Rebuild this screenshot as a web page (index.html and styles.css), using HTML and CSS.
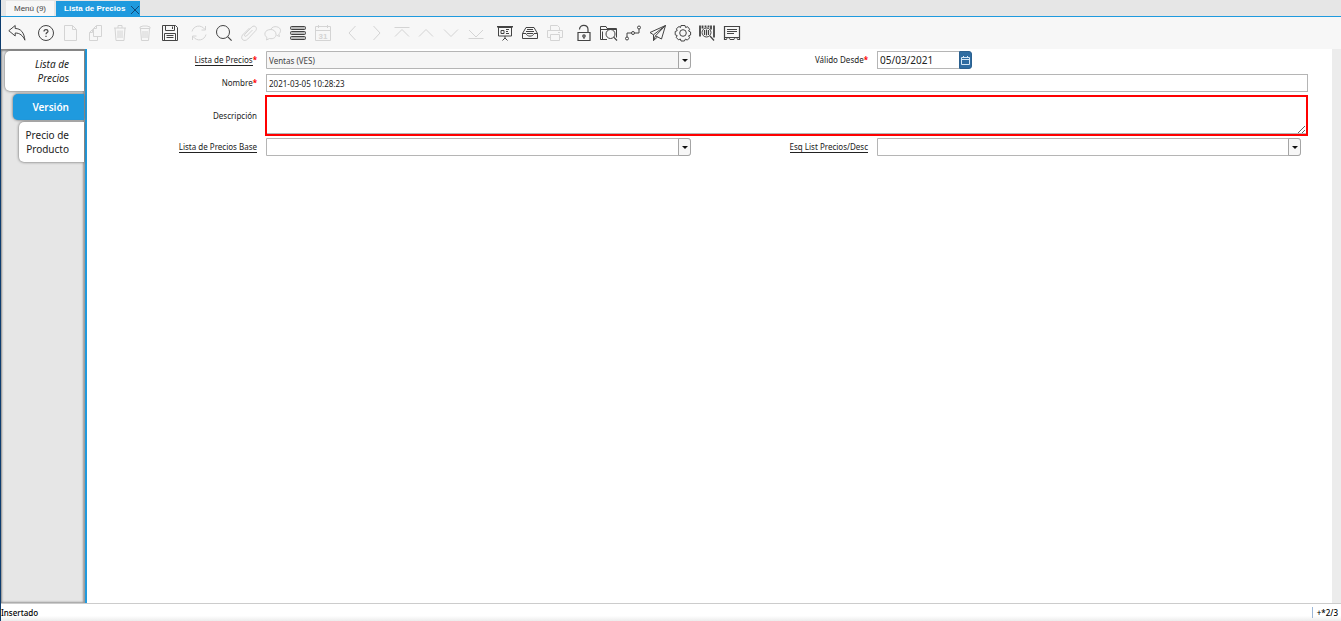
FILE: index.html
```html
<!DOCTYPE html>
<html lang="es">
<head>
  <meta charset="UTF-8">
  <title>Lista de Precios</title>
  <meta name="viewport" content="width=device-width, initial-scale=1.0">
  <link rel="stylesheet" href="styles.css">
</head>
<body>

<nav class="window-tabs">
  <button class="window-tab">Menú (9)</button>
  <button class="window-tab active">Lista de Precios
    <svg class="close" viewBox="0 0 10 10"><path d="M1 1l8 8M9 1l-8 8"/></svg>
  </button>
</nav>

<div class="toolbar">
  <div class="group single">
    <button class="tool" aria-label="Deshacer"><svg viewBox="0 0 18 18"><path d="M.8 6.700L7.200 1.500v3c5.500 0 9 4 9.700 11.700C14.800 11.400 11.800 9 7.200 9v3z"/></svg></button>
  </div>
  <div class="group wide">
    <button class="tool" aria-label="Ayuda"><svg viewBox="0 0 18 18"><circle cx="9" cy="9" r="7.500"/><path class="bold" d="M7 7.500c0-2.700 4-2.400 4-.3C11 8.600 9 8.600 9 10.300M9 11.800v1.200"/></svg></button>
    <button class="tool" aria-label="Nuevo" disabled><svg viewBox="0 0 18 18"><path d="M2.500 1.500h8l4 4v11h-12zM10.500 1.500v4h4"/></svg></button>
    <button class="tool" aria-label="Copiar" disabled><svg viewBox="0 0 18 18"><path d="M6.500 4.500l3-3h5v11h-8zM6.500 4.500h3v-3M6.500 5.500h-1l-3 3v8h8v-4M2.500 8.500h3v-3"/></svg></button>
    <button class="tool" aria-label="Borrar" disabled><svg viewBox="0 0 18 18"><path d="M3 4h12M7 4V1.500h4V4M4 4l1 12.500h8L14 4M7 6.500v7.500M9 6.500v7.500M11 6.500v7.500"/></svg></button>
    <button class="tool" aria-label="Borrar selección" disabled><svg viewBox="0 0 18 18"><path d="M4 4.500V3l3-1h4l3 1v1.500zM4.500 4.500l1 12h7l1-12M7 7v7M9 7v7M11 7v7"/></svg></button>
    <button class="tool" aria-label="Guardar"><svg viewBox="0 0 18 18"><path d="M1.500 1.500h13l2 2v13h-15zM4.500 1.500v5h9v-5M3.500 16.500v-7h11v7M5.500 11.500h7M5.500 13.500h7"/><path d="M11.500 2.500v2.500"/></svg></button>
  </div>
  <div class="group wide">
    <button class="tool" aria-label="Actualizar" disabled><svg viewBox="0 0 18 18"><path d="M2 7.500C3.500 1.500 11 0 15 5.500M15.500 2v4h-4M16 10.500c-1.500 6-9 7.500-13 2M2.500 16v-4h4"/></svg></button>
    <button class="tool" aria-label="Buscar"><svg viewBox="0 0 18 18"><circle cx="8" cy="8" r="6.500"/><path class="bold" d="M12.600 12.600l4 4"/></svg></button>
    <button class="tool" aria-label="Anexo" disabled><svg viewBox="0 0 18 18"><path d="M12.500 6l-6 6c-1.300 1-2.700-.3-1.700-1.700l7-7.300c3-2.500 6 .8 4 3.500l-8 8.500c-3.500 3.500-8 0-5.300-4L9.500 4"/></svg></button>
    <button class="tool" aria-label="Chat" disabled><svg viewBox="0 0 18 18"><path d="M7 5c2-4 10-2.500 9.500 1.700 0 1.500-.7 2.500-1.700 3.300l.7 2.500-3-1.300M7 5.500c-7 0-7.500 6-4 8L2.500 16l3-1.500c4 .8 6.500-1 6.500-4.200C12 7.500 9.500 5.500 7 5.500z"/></svg></button>
    <button class="tool" aria-label="Vista de lista"><svg viewBox="0 0 18 18"><rect class="bar" x="1.500" y="2.500" width="15" height="3" rx="1"/><rect class="bar" x="1.500" y="7.500" width="15" height="3" rx="1"/><rect class="bar" x="1.500" y="12.500" width="15" height="3" rx="1"/></svg></button>
    <button class="tool" aria-label="Calendario" disabled><svg viewBox="0 0 18 18"><path d="M1.500 2.500h15v14h-15zM1.500 6.500h15M4.500 1v3M13.500 1v3"/><text x="9" y="14.500">31</text></svg></button>
  </div>
  <div class="group wide">
    <button class="tool" aria-label="Anterior" disabled><svg viewBox="0 0 18 18"><path d="M12.500 2L6 9l6.500 7"/></svg></button>
    <button class="tool" aria-label="Siguiente" disabled><svg viewBox="0 0 18 18"><path d="M5.500 2L12 9l-6.500 7"/></svg></button>
    <button class="tool" aria-label="Primero" disabled><svg viewBox="0 0 18 18"><path d="M1.500 3.500h15M2 12.500l7-7 7 7"/></svg></button>
    <button class="tool" aria-label="Arriba" disabled><svg viewBox="0 0 18 18"><path d="M2 12.500l7-7 7 7"/></svg></button>
    <button class="tool" aria-label="Abajo" disabled><svg viewBox="0 0 18 18"><path d="M2 5.500l7 7 7-7"/></svg></button>
    <button class="tool" aria-label="Último" disabled><svg viewBox="0 0 18 18"><path d="M1.500 14.500h15M2 6l7 7 7-7"/></svg></button>
  </div>
  <div class="group">
    <button class="tool" aria-label="Informe"><svg viewBox="0 0 18 18"><path d="M1 2.500h16M2.500 2.500v9.500h13V2.500M1.500 3.500h15M9 12v2M6.500 16.500L9 14l2.500 2.500"/><path d="M5 6.500h3v3H5zM10 5.500h3M10 7.500h2M10 9.500h3"/></svg></button>
    <button class="tool" aria-label="Archivo"><svg viewBox="0 0 18 18"><path d="M1.500 9.500L5 3.500h8l3.500 6v5h-15zM1.500 9.500H5c1 3.500 7 3.500 8 0h3.500M6 5.500h6M5 7.500h8M6 9.500h6"/></svg></button>
    <button class="tool" aria-label="Imprimir" disabled><svg viewBox="0 0 18 18"><path d="M4.500 6.500v-5h7l2 2v3M4 13.500H1.500v-7h15v7H14M4.500 10.500h9v6h-9zM12 8.500h2"/></svg></button>
  </div>
  <div class="group last">
    <button class="tool" aria-label="Bloquear"><svg viewBox="0 0 18 18"><path class="bold" d="M3 8.500h12v8H3zM4.500 5.500c0-5.500 8.500-5.500 8.500 0v3"/><circle class="bold" cx="9" cy="12" r="1.200"/><path d="M9 13v2"/></svg></button>
    <button class="tool" aria-label="Detalle"><svg viewBox="0 0 18 18"><path d="M7 15.500H.500v-13H6l1 2h9.500v9M.500 5.500h16M2.500 15V7.500"/><circle cx="10.500" cy="10" r="4.500"/><path class="bold" d="M13.700 13.200l3.300 3.300"/></svg></button>
    <button class="tool" aria-label="Flujo de trabajo"><svg viewBox="0 0 18 18"><circle cx="3" cy="14.500" r="1.500"/><circle cx="9" cy="9" r="1.500"/><circle cx="15" cy="3.500" r="1.500"/><path d="M3 13V9h4.500M10.500 9H15V5"/></svg></button>
    <button class="tool" aria-label="Enviar"><svg viewBox="0 0 18 18"><path d="M16.500 1.500L1 8.500l3.500 2.300zM16.500 1.500L6.500 11.800l6 3.200zM4.500 10.800v5.700l2-4.700M4.500 16.500l4-3.500"/></svg></button>
    <button class="tool" aria-label="Procesos"><svg viewBox="0 0 18 18"><path d="M7 1.500h4l.6 2 2-.8 2 2.500-1 1.800 2 1v3l-2 .8 1 2-2.300 2.300-1.900-1-1 1.900H7l-.6-2-2 .8-2.200-2.500 1-1.700-2-.8V7.500l2-.8-.8-2L5 2.500l1.500 1z"/><circle cx="9" cy="9" r="3.300"/></svg></button>
    <button class="tool" aria-label="Código de barras"><svg viewBox="0 0 18 18"><path class="heavy" d="M2 1.500v11M4.500 1.500v3M7.500 1.500v2M10.500 1.500v2M13 1.500v4M16 1.500v12"/><circle cx="8.500" cy="8.500" r="4.500"/><path class="bold" d="M6.500 6v5M8.500 5.500v6M10.500 6v5M12 12l4 4.500"/></svg></button>
    <button class="tool" aria-label="Formulario"><svg viewBox="0 0 18 18"><path class="bold" d="M3.500 15.500h-2v-13h15v13h-2"/><path d="M3.500 15.500c0-2.500 3-2.500 3.500 0h4c.5-2.500 3.500-2.500 3.500 0M1.500 13.500h15M4 5.500h10M4 7.500h10M4 9.500h7"/></svg></button>
  </div>
</div>

<main class="content">
  <nav class="side-tabs">
    <button class="side-tab parent">Lista de<br>Precios</button>
    <button class="side-tab current">Versión</button>
    <button class="side-tab child">Precio de<br>Producto</button>
  </nav>

  <form class="form">
    <div class="row first">
      <label for="priceList"><span class="link">Lista de Precios</span><span class="required">*</span></label>
      <div class="combo">
        <select id="priceList" disabled><option>Ventas (VES)</option></select>
        <span class="arrow"></span>
      </div>
      <label for="validFrom">Válido Desde<span class="required">*</span></label>
      <div class="date">
        <input type="text" id="validFrom" value="05/03/2021">
        <button type="button" class="date-btn" aria-label="Calendario"><svg viewBox="0 0 11 11"><path d="M1.500 2.500h8v7h-8zM1.500 4.500h8M3.500 1v2M7.500 1v2"/></svg></button>
      </div>
    </div>
    <div class="row">
      <label for="name">Nombre<span class="required">*</span></label>
      <input type="text" id="name" class="full" value="2021-03-05 10:28:23">
    </div>
    <div class="row tall">
      <label for="description">Descripción</label>
      <textarea id="description" class="full"></textarea>
    </div>
    <div class="row">
      <label for="baseList"><span class="link">Lista de Precios Base</span></label>
      <div class="combo">
        <select id="baseList"><option></option></select>
        <span class="arrow"></span>
      </div>
      <label for="schema"><span class="link">Esq List Precios/Desc</span></label>
      <div class="combo">
        <select id="schema"><option></option></select>
        <span class="arrow"></span>
      </div>
    </div>
  </form>
</main>

<footer class="status">
  <span>Insertado</span>
  <span class="record">+*2/3</span>
</footer>

</body>
</html>
```
FILE: styles.css
```css
* { box-sizing: border-box; }
body { margin: 0; min-height: 100vh; display: flex; flex-direction: column; border-left: 1px solid #0d3c6e; font-family: "Noto Sans", "Open Sans", sans-serif; font-size: 8px; color: #222; background: #fff; }
button, input, select, textarea { font: inherit; color: inherit; margin: 0; border-radius: 0; }
svg { fill: none; stroke: currentColor; display: block; }

.window-tabs { display: flex; gap: 2px; height: 17px; padding: 1px 0 0 5px; background: #e6e6e6; border-bottom: 1px solid #1f9ade; }
.window-tab { display: flex; align-items: center; padding: 0 8px; border: none; background: #f7f7f7; color: #444; font-family: "Liberation Sans", Arial, sans-serif; font-size: 8px; }
.window-tab.active { background: #1f9ade; color: #fff; font-weight: bold; padding-right: 0; gap: 5px; }
.close { width: 10px; height: 10px; stroke: #134a78; margin-top: 2px; }

.toolbar { display: flex; gap: 9px; align-items: center; height: 32px; padding-left: 6px; background: #f7f7f7; }
.group { display: flex; justify-content: space-between; width: 70px; }
.group.single { width: 20px; }
.group.wide { width: 144px; }
.group.last { width: 168px; }
.tool { width: 20px; height: 20px; padding: 1px; border: none; background: none; color: #444; cursor: pointer; }
.tool:disabled { color: #d4d4d4; cursor: default; }
.tool svg { width: 18px; height: 18px; }
.tool .bold { stroke-width: 1.2; }
.tool .heavy { stroke-width: 1.8; }
.tool .bar { fill: #bbb; }
.tool text { font: bold 8px "Liberation Sans", Arial, sans-serif; text-anchor: middle; fill: currentColor; stroke: none; }

.content { flex: 1; display: flex; border-right: 9px solid #ececec; }
.side-tabs { display: flex; flex-direction: column; align-items: flex-end; gap: 2px; width: 86px; padding: 2px 1px 0 0; background: #e6e6e6; border-right: 2px solid #1f9ade; box-shadow: inset 1px 2px 2px #888, inset -2px -1px 2px #999; }
.side-tab { padding: 6px 15px 6px 0; border: none; border-radius: 5px 0 0 5px; background: #fff; box-shadow: 0 0 3px #555; font-size: 10px; line-height: 14px; text-align: right; cursor: pointer; }
.side-tab.parent { width: 79px; margin-bottom: 1px; font-style: italic; }
.side-tab.current { width: 71px; background: #1f9ade; color: #fff; font-weight: 600; }
.side-tab.child { width: 65px; }

.form { flex: 1; display: flex; flex-direction: column; gap: 2px; padding: 2px 24px 0 0; }
.row { display: grid; grid-template-columns: 179fr 432fr 179fr 431fr; align-items: center; }
.row.first { margin-bottom: 3px; }
.row.tall { margin-top: 1px; }
.row label { padding-right: 9px; text-align: right; line-height: 12px; }
.link { border-bottom: 1px solid #222; }
.required { color: #f00; font-weight: bold; }
.full { grid-column: 2 / -1; }
.row input, .row select { height: 18px; width: 100%; padding: 0 2px; border: 1px solid #b5b5b5; background: #fff; outline: none; }
.row textarea { height: 41px; margin-left: -1px; border: 2px solid #f00; box-shadow: inset 0 -1px #b5b5b5; resize: vertical; outline: none; }

.combo { display: grid; margin-right: 7px; }
.row select { grid-area: 1 / 1; appearance: none; border-radius: 0 3px 3px 0; }
.row select:disabled { background: #f6f6f6; color: #444; opacity: 1; }
.arrow { grid-area: 1 / 1; justify-self: end; display: flex; align-items: center; justify-content: center; width: 13px; height: 18px; border: 1px solid #a5a5a5; border-radius: 0 3px 3px 0; background: #f7f7f7; pointer-events: none; }
.arrow::after { content: ""; border: 3px solid transparent; border-top-color: #111; border-bottom: none; }

.date { display: flex; width: 95px; }
.date input { flex: 1; min-width: 0; border-right: none; font-size: 10px; }
.date-btn { width: 13px; height: 18px; padding: 0; border: 1px solid #2b608f; border-radius: 0 3px 3px 0; background: #2f6ca1; color: #d5e6f5; cursor: pointer; }
.date-btn svg { width: 11px; height: 11px; }

.status { display: flex; justify-content: space-between; align-items: center; height: 18px; padding-right: 3px; border-top: 1px solid #ccc; background: linear-gradient(#fff 70%, #ececec); color: #000; font-weight: 500; }
.record { padding-left: 4px; border-left: 1px solid #9db8d8; }
```
